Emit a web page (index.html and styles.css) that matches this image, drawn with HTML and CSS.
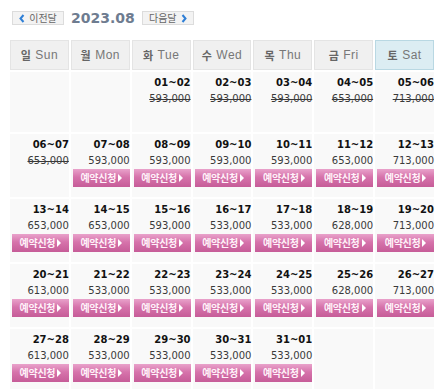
FILE: index.html
```html
<!DOCTYPE html>
<html lang="ko">
<head>
<meta charset="utf-8">
<link rel="stylesheet" href="styles.css">
</head>
<body>
<div class="page">
  <div class="nav">
    <button class="navbtn prev"><svg class="chev" width="6" height="9" viewBox="0 0 6 9"><polyline points="4.5,1 1.5,4.5 4.5,8" fill="none" stroke="#2f7fd6" stroke-width="2"/></svg><span>이전달</span></button>
    <span class="month">2023.08</span>
    <button class="navbtn next"><span>다음달</span><svg class="chev" width="6" height="9" viewBox="0 0 6 9"><polyline points="1.5,1 4.5,4.5 1.5,8" fill="none" stroke="#2f7fd6" stroke-width="2"/></svg></button>
  </div>
  <div class="cal">
    <div class="wd"><b>일</b> Sun</div>
    <div class="wd"><b>월</b> Mon</div>
    <div class="wd"><b>화</b> Tue</div>
    <div class="wd"><b>수</b> Wed</div>
    <div class="wd"><b>목</b> Thu</div>
    <div class="wd"><b>금</b> Fri</div>
    <div class="wd sat"><b>토</b> Sat</div>

    <div class="day"></div>
    <div class="day"></div>
    <div class="day past"><div class="date">01~02</div><div class="price">593,000</div></div>
    <div class="day past"><div class="date">02~03</div><div class="price">593,000</div></div>
    <div class="day past"><div class="date">03~04</div><div class="price">593,000</div></div>
    <div class="day past"><div class="date">04~05</div><div class="price">653,000</div></div>
    <div class="day past"><div class="date">05~06</div><div class="price">713,000</div></div>

    <div class="day past"><div class="date">06~07</div><div class="price">653,000</div></div>
    <div class="day"><div class="date">07~08</div><div class="price">593,000</div><a class="book">예약신청<i class="tri"></i></a></div>
    <div class="day"><div class="date">08~09</div><div class="price">593,000</div><a class="book">예약신청<i class="tri"></i></a></div>
    <div class="day"><div class="date">09~10</div><div class="price">593,000</div><a class="book">예약신청<i class="tri"></i></a></div>
    <div class="day"><div class="date">10~11</div><div class="price">593,000</div><a class="book">예약신청<i class="tri"></i></a></div>
    <div class="day"><div class="date">11~12</div><div class="price">653,000</div><a class="book">예약신청<i class="tri"></i></a></div>
    <div class="day"><div class="date">12~13</div><div class="price">713,000</div><a class="book">예약신청<i class="tri"></i></a></div>

    <div class="day"><div class="date">13~14</div><div class="price">653,000</div><a class="book">예약신청<i class="tri"></i></a></div>
    <div class="day"><div class="date">14~15</div><div class="price">653,000</div><a class="book">예약신청<i class="tri"></i></a></div>
    <div class="day"><div class="date">15~16</div><div class="price">593,000</div><a class="book">예약신청<i class="tri"></i></a></div>
    <div class="day"><div class="date">16~17</div><div class="price">533,000</div><a class="book">예약신청<i class="tri"></i></a></div>
    <div class="day"><div class="date">17~18</div><div class="price">533,000</div><a class="book">예약신청<i class="tri"></i></a></div>
    <div class="day"><div class="date">18~19</div><div class="price">628,000</div><a class="book">예약신청<i class="tri"></i></a></div>
    <div class="day"><div class="date">19~20</div><div class="price">713,000</div><a class="book">예약신청<i class="tri"></i></a></div>

    <div class="day"><div class="date">20~21</div><div class="price">613,000</div><a class="book">예약신청<i class="tri"></i></a></div>
    <div class="day"><div class="date">21~22</div><div class="price">533,000</div><a class="book">예약신청<i class="tri"></i></a></div>
    <div class="day"><div class="date">22~23</div><div class="price">533,000</div><a class="book">예약신청<i class="tri"></i></a></div>
    <div class="day"><div class="date">23~24</div><div class="price">533,000</div><a class="book">예약신청<i class="tri"></i></a></div>
    <div class="day"><div class="date">24~25</div><div class="price">533,000</div><a class="book">예약신청<i class="tri"></i></a></div>
    <div class="day"><div class="date">25~26</div><div class="price">628,000</div><a class="book">예약신청<i class="tri"></i></a></div>
    <div class="day"><div class="date">26~27</div><div class="price">713,000</div><a class="book">예약신청<i class="tri"></i></a></div>

    <div class="day"><div class="date">27~28</div><div class="price">613,000</div><a class="book">예약신청<i class="tri"></i></a></div>
    <div class="day"><div class="date">28~29</div><div class="price">533,000</div><a class="book">예약신청<i class="tri"></i></a></div>
    <div class="day"><div class="date">29~30</div><div class="price">533,000</div><a class="book">예약신청<i class="tri"></i></a></div>
    <div class="day"><div class="date">30~31</div><div class="price">533,000</div><a class="book">예약신청<i class="tri"></i></a></div>
    <div class="day"><div class="date">31~01</div><div class="price">533,000</div><a class="book">예약신청<i class="tri"></i></a></div>
    <div class="day"></div>
    <div class="day"></div>
  </div>
</div>
</body>
</html>
```

FILE: styles.css
```css
html, body {
  margin: 0;
  padding: 0;
  background: #fff;
}
body {
  font-family: "DejaVu Sans", Verdana, sans-serif;
  color: #333;
}
.page {
  padding: 11px 0 0 10px;
  width: 424px;
}
.nav {
  display: flex;
  align-items: center;
  height: 14px;
  padding-left: 2px;
}
.navbtn {
  display: flex;
  align-items: center;
  justify-content: center;
  gap: 4px;
  box-sizing: border-box;
  width: 52px;
  height: 14px;
  padding: 0;
  margin: 0;
  background: #f3f3f3;
  border: 1px solid #dcdcdc;
  font-family: "Noto Sans CJK KR", sans-serif;
  font-size: 10px;
  line-height: 12px;
  color: #666;
}
.chev { display: block; }
.month {
  margin: 0 7px 0 7px;
  font-family: "DejaVu Sans", Verdana, sans-serif;
  font-weight: bold;
  font-size: 14px;
  color: #6e7c90;
  line-height: 14px;
}
.cal {
  margin-top: 15px;
  display: grid;
  grid-template-columns: repeat(7, 1fr);
  grid-template-rows: 30px;
  grid-auto-rows: minmax(60px, auto);
  gap: 2px;
}
.wd {
  box-sizing: border-box;
  display: flex;
  align-items: center;
  justify-content: center;
  gap: 4px;
  background: #f0f0f0;
  border: 1px solid #e4e4e4;
  font-family: "Liberation Sans", "Noto Sans CJK KR", sans-serif;
  font-size: 12px;
  color: #777;
  letter-spacing: 0.5px;
}
.wd b {
  font-family: "Noto Sans CJK KR", sans-serif;
  font-weight: bold;
  font-size: 11px;
  color: #666;
}
.wd.sat {
  background: #dcedf3;
  border-color: #b9d8e3;
}
.day {
  background: #f9f9f9;
  padding: 3px 0 10px 2px;
  text-align: right;
}
.date {
  font-weight: bold;
  font-size: 10px;
  line-height: 16px;
  color: #111;
}
.price {
  font-size: 10px;
  line-height: 15px;
  color: #3a3a3a;
}
.past .price {
  text-decoration: line-through;
}
.book {
  display: flex;
  align-items: center;
  justify-content: center;
  gap: 2px;
  height: 18px;
  margin-top: 1px;
  background: linear-gradient(#e9a2cb, #d673ab 45%, #c65c98);
  font-family: "Noto Sans CJK KR", sans-serif;
  font-weight: bold;
  font-size: 10px;
  line-height: 18px;
  color: #fff2f9;
  letter-spacing: -0.3px;
}
.tri {
  display: block;
  width: 0;
  height: 0;
  border-left: 4px solid #fff;
  border-top: 4px solid transparent;
  border-bottom: 4px solid transparent;
}
```
